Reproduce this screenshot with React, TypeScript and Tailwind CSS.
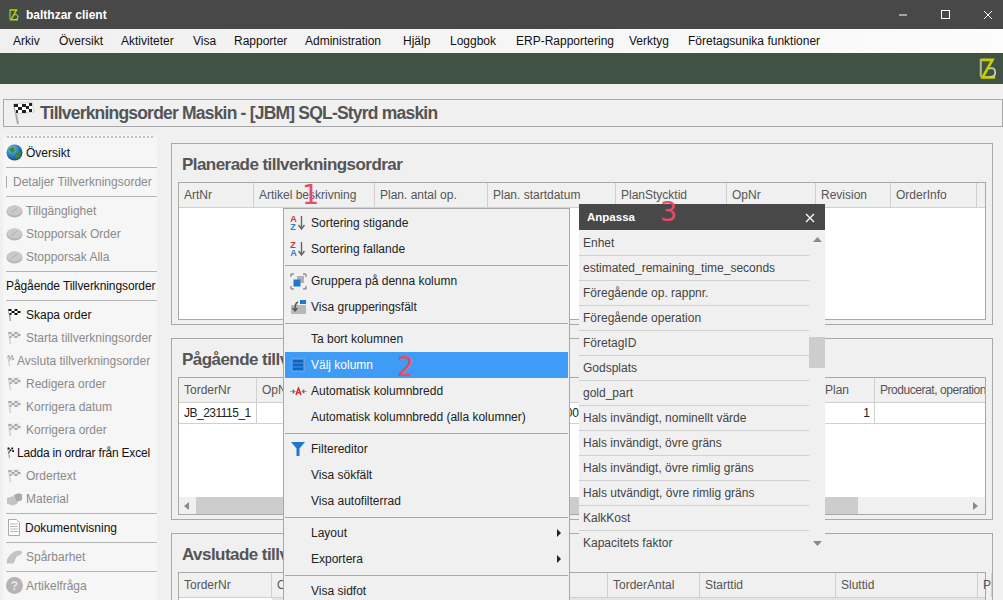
import React from "react";

const font = "font-['Liberation_Sans',Arial,sans-serif]";

function Flag({ dim = false, small = false }: { dim?: boolean; small?: boolean }) {
  const a = dim ? "#a8a8a8" : "#111";
  const b = dim ? "#e8e8e8" : "#fff";
  return (
    <svg width={small ? 8 : 17} height="15" viewBox={small ? "0 0 9 15" : "0 0 16 15"} className="shrink-0">
      <path d="M2 2 L4 14" stroke={dim ? "#c8c8c8" : "#999"} strokeWidth="1.2" />
      {small ? (
        <>
          <path d="M2 2 L8 1 L9 7 L3 8Z" fill={b} />
          <path d="M2 2h2v2h-2zM6 2h2v2h-2zM4 4h2v2h-2zM7 5h2v2h-2zM3 6h1v2h-1z" fill={a} />
        </>
      ) : (
        <>
          <path d="M2 2 L13 1 L14 7 L3 8Z" fill={b} />
          <path d="M2 2h3v2h-3zM8 2h3v2h-3zM5 4h3v2h-3zM11 4h3v2h-3zM3 6h2v2h-2zM8 6h3v2h-3z" fill={a} />
        </>
      )}
    </svg>
  );
}

function Globe() {
  return (
    <svg width="17" height="17" viewBox="0 0 17 17" className="shrink-0">
      <defs>
        <radialGradient id="g" cx="35%" cy="30%" r="75%">
          <stop offset="0" stopColor="#7cc0ee" />
          <stop offset="0.6" stopColor="#2478b8" />
          <stop offset="1" stopColor="#0f4a80" />
        </radialGradient>
      </defs>
      <circle cx="8.5" cy="8.5" r="8" fill="url(#g)" />
      <path d="M3 5 L7 3 L9 6 L7 9 L5 8Z M10 9 L15 8 L14 13 L10 15 L9 12Z" fill="#3f8a2f" />
    </svg>
  );
}

function Pill() {
  return (
    <svg width="17" height="14" viewBox="0 0 17 14" className="shrink-0">
      <ellipse cx="8.5" cy="7.5" rx="8" ry="6" fill="#b4b4b4" />
      <ellipse cx="8.5" cy="6.5" rx="7.5" ry="5" fill="#cacaca" />
      <path d="M5 9 L11 4" stroke="#aaa" strokeWidth="1" />
    </svg>
  );
}

function Doc() {
  return (
    <svg width="16" height="17" viewBox="0 0 16 17" className="shrink-0">
      <path d="M2.5 .5h8l3 3v13h-11z" fill="#fff" stroke="#aaa" />
      <path d="M4 5h8M4 7.5h8M4 10h8M4 12.5h8" stroke="#bbb" />
    </svg>
  );
}

function Box() {
  return (
    <svg width="17" height="14" viewBox="0 0 18 14" className="shrink-0">
      <path d="M1 6l6-2 5 2v6l-5 2-6-2z" fill="#c4c4c4" />
      <path d="M8 3l5-2 4 1v6l-5 2z" fill="#a9a9a9" />
    </svg>
  );
}

function Trace() {
  return (
    <svg width="17" height="16" viewBox="0 0 18 16" className="shrink-0">
      <path d="M1 15C0 10 4 5 8 3c3-2 8-2 9 0 0 3-4 3-6 5-2 3-1 6-4 7-2 0-4 0-6 0z" fill="#c4c4c4" />
    </svg>
  );
}

function Question() {
  return (
    <span className="flex h-[17px] w-[17px] shrink-0 items-center justify-center rounded-full bg-[#b4b4b4] text-[12px] font-bold text-[#e8e8e8]">?</span>
  );
}

function Logo({ size }: { size: number }) {
  return (
    <svg width={size} height={size * 1.2} viewBox="0 0 20 24" fill="none">
      <path d="M2 1v20" stroke="#a8b88a" strokeWidth="2.4" />
      <path d="M2 2h13L4 21.5h14" stroke="#c4d000" strokeWidth="3" />
      <path d="M11 12c4-2 7 0 7 4s-3 5-6 5" stroke="#c5d2a8" strokeWidth="2" />
    </svg>
  );
}

type Side = { t: string; icon?: React.ReactNode; dim?: boolean; cls?: string };

const Sep = () => <div className="mt-[3px] mb-[2px] ml-[3px] h-px bg-[#b4b4b4]" />;

function SideRow({ t, icon, dim, cls = "" }: Side) {
  return (
    <div className={`flex h-[23px] items-center gap-[3px] pl-[3px] whitespace-nowrap text-[12px] ${dim ? "text-[#8a8a8a]" : "text-[#111]"} ${cls}`}>
      {icon}
      <span>{t}</span>
    </div>
  );
}

function Sidebar() {
  return (
    <aside className="mt-[8px] ml-[3px] flex w-[154px] shrink-0 flex-col bg-[#f6f6f6] pt-[1px]">
      <div className="mx-[4px] mb-[3px] border-t-2 border-dotted border-[#c4c4c4]" />
      <SideRow t="Översikt" icon={<Globe />} />
      <Sep />
      <SideRow t="Detaljer Tillverkningsorder" dim icon={<span className="mr-[3px] h-3 w-[1px] bg-[#aaa]" />} />
      <Sep />
      <SideRow t="Tillgänglighet" dim icon={<Pill />} />
      <SideRow t="Stopporsak Order" dim icon={<Pill />} />
      <SideRow t="Stopporsak Alla" dim icon={<Pill />} />
      <Sep />
      <SideRow t="Pågående Tillverkningsorder" cls="tracking-[-0.1px]" />
      <Sep />
      <SideRow t="Skapa order" icon={<Flag />} />
      <SideRow t="Starta tillverkningsorder" dim icon={<Flag dim />} />
      <SideRow t="Avsluta tillverkningsorder" dim icon={<Flag dim small />} />
      <SideRow t="Redigera order" dim icon={<Flag dim />} />
      <SideRow t="Korrigera datum" dim icon={<Flag dim />} />
      <SideRow t="Korrigera order" dim icon={<Flag dim />} />
      <SideRow t="Ladda in ordrar från Excel" cls="tracking-[-0.2px]" icon={<Flag small />} />
      <SideRow t="Ordertext" dim icon={<Flag dim />} />
      <SideRow t="Material" dim icon={<Box />} />
      <Sep />
      <SideRow t="Dokumentvisning" icon={<Doc />} />
      <Sep />
      <SideRow t="Spårbarhet" dim icon={<Trace />} />
      <Sep />
      <SideRow t="Artikelfråga" dim icon={<Question />} />
    </aside>
  );
}

function HeaderRow({ cols }: { cols: [string, string][] }) {
  return (
    <div className="flex h-[25px] shrink-0 border-b border-[#d0d0d0] bg-[#f0f0f0]">
      {cols.map(([t, w], i) => (
        <div key={i} className={`flex shrink-0 items-center overflow-hidden whitespace-nowrap border-r border-[#d0d0d0] pl-[5px] text-[12px] text-[#555] ${w}`}>
          {t}
        </div>
      ))}
    </div>
  );
}

function Arrow({ d }: { d: "l" | "r" | "u" | "d" }) {
  const p = { l: "M6 1v8L1 5z", r: "M1 1v8l5-4z", u: "M0 6h9L4.5 1z", d: "M0 1h9L4.5 6z" }[d];
  return (
    <svg width="9" height="10" viewBox="0 0 9 10" className="shrink-0">
      <path d={p} fill="#8a8a8a" />
    </svg>
  );
}

function Panel({ title, className, children }: { title: string; className: string; children: React.ReactNode }) {
  return (
    <section className={`flex shrink-0 flex-col border border-[#a8a8a8] bg-[#f0f0f0] px-[6px] ${className}`}>
      <h2 className="flex h-[38px] shrink-0 items-center pt-[2px] pl-[4px] text-[17px] leading-none font-bold tracking-[-0.55px] whitespace-nowrap text-[#555]">{title}</h2>
      {children}
    </section>
  );
}

function Main() {
  return (
    <main className="flex min-w-0 flex-1 flex-col gap-[13px] pt-[16px] pl-[14px] pr-[10px]">
      <Panel title="Planerade tillverkningsordrar" className="h-[182px]">
        <div className="flex h-[138px] flex-col border border-[#a8a8a8] bg-white">
          <HeaderRow
            cols={[
              ["ArtNr", "w-[75px]"],
              ["Artikel beskrivning", "w-[121px]"],
              ["Plan. antal op.", "w-[113px]"],
              ["Plan. startdatum", "w-[128px]"],
              ["PlanStycktid", "w-[111px]"],
              ["OpNr", "w-[89px]"],
              ["Revision", "w-[75px]"],
              ["OrderInfo", "w-[86px]"],
            ]}
          />
        </div>
      </Panel>
      <Panel title="Pågående tillverkningsordrar" className="h-[182px]">
        <div className="flex h-[138px] flex-col border border-[#a8a8a8] bg-white">
          <div className="flex h-[25px] shrink-0 border-b border-[#d0d0d0] bg-[#f0f0f0] text-[12px] text-[#555]">
            <div className="flex w-[78px] items-center border-r border-[#d0d0d0] pl-[5px]">TorderNr</div>
            <div className="flex w-[564px] items-center pl-[5px]">OpNr</div>
            <div className="flex w-[54px] items-center border-r border-[#d0d0d0] pl-[4px]">Plan</div>
            <div className="flex flex-1 items-center overflow-hidden pl-[5px] tracking-[-0.45px] whitespace-nowrap">Producerat, operation</div>
          </div>
          <div className="flex h-[21px] shrink-0 border-b border-[#d0d0d0] text-[12px] text-[#222]">
            <div className="flex w-[78px] items-center border-r border-[#d0d0d0] pl-[5px] tracking-[-0.5px]">JB_231115_1</div>
            <div className="flex w-[322px] items-center justify-end">00</div>
            <div className="w-[242px]" />
            <div className="flex w-[54px] items-center justify-end border-r border-[#d0d0d0] pr-[4px]">1</div>
          </div>
          <div className="flex-1" />
          <div className="flex h-[17px] shrink-0 items-center bg-[#f0f0f0]">
            <div className="flex w-[17px] justify-center"><Arrow d="l" /></div>
            <div className="h-full w-[662px] bg-[#cdcdcd]" />
            <div className="flex-1" />
            <div className="flex w-[17px] justify-center"><Arrow d="r" /></div>
          </div>
        </div>
      </Panel>
      <Panel title="Avslutade tillverkningsordrar" className="h-[100px]">
        <div className="flex flex-1 flex-col border border-[#a8a8a8] bg-white">
          <HeaderRow
            cols={[
              ["TorderNr", "w-[93px]"],
              ["Operation", "w-[336px]"],
              ["TorderAntal", "w-[92px]"],
              ["Starttid", "w-[136px]"],
              ["Sluttid", "w-[142px]"],
              ["Pl", "w-[14px]"],
            ]}
          />
          <div className="flex h-[20px]">
            <div className="w-[93px] bg-white" />
            <div className="flex-1 bg-[#e4e4e4]" />
          </div>
        </div>
      </Panel>
    </main>
  );
}

function MI({ t, icon, active, sub }: { t: string; icon?: React.ReactNode; active?: boolean; sub?: boolean }) {
  return (
    <div className={`flex h-[26px] shrink-0 items-center text-[12px] ${active ? "bg-[#3f9cf6] text-white" : "text-[#222]"}`}>
      <div className="flex w-[26px] justify-center">{icon}</div>
      <div className="flex-1 whitespace-nowrap">{t}</div>
      {sub && (
        <svg width="6" height="8" viewBox="0 0 6 8" className="mr-[6px]">
          <path d="M1 0v8l4-4z" fill="#222" />
        </svg>
      )}
    </div>
  );
}

const MSp = () => <div className="my-[2.5px] h-px shrink-0 bg-[#a8a8a8]" />;

function SortIcon({ top, bottom, topCls, bottomCls }: { top: string; bottom: string; topCls: string; bottomCls: string }) {
  return (
    <span className="flex items-center">
      <span className="flex flex-col text-[9px] leading-[8px] font-bold">
        <span className={topCls}>{top}</span>
        <span className={bottomCls}>{bottom}</span>
      </span>
      <svg width="9" height="16" viewBox="0 0 9 16">
        <path d="M4.5 1v12M1.5 10l3 4 3-4" stroke="#666" strokeWidth="1.4" fill="none" />
      </svg>
    </span>
  );
}

function ContextMenu() {
  return (
    <div className="absolute top-[208px] left-[283px] flex h-[400px] w-[287px] flex-col border border-[#a8a8a8] bg-[#f0f0f0] px-[1px] pt-[1px]">
      <MI t="Sortering stigande" icon={<SortIcon top="A" bottom="Z" topCls="text-[#d03030]" bottomCls="text-[#2a7cd8]" />} />
      <MI t="Sortering fallande" icon={<SortIcon top="Z" bottom="A" topCls="text-[#d03030]" bottomCls="text-[#2a7cd8]" />} />
      <MSp />
      <MI
        t="Gruppera på denna kolumn"
        icon={
          <svg width="17" height="17" viewBox="0 0 17 17">
            <path d="M1 4V1h3M13 1h3v3M16 13v3h-3M4 16H1v-3" stroke="#666" fill="none" />
            <rect x="7" y="3" width="7" height="7" fill="#b0b0b0" />
            <rect x="3.5" y="6.5" width="7" height="7" fill="#1e78d2" />
          </svg>
        }
      />
      <MI
        t="Visa grupperingsfält"
        icon={
          <svg width="15" height="14" viewBox="0 0 15 14">
            <rect x="0" y="5" width="15" height="9" fill="#b8b8b8" />
            <rect x="9" y="0" width="6" height="4" fill="#1e78d2" />
            <path d="M7 2C4 3 4 6 4 10M1.5 8l2.5 3 2.5-3" stroke="#555" strokeWidth="1.4" fill="none" />
          </svg>
        }
      />
      <MSp />
      <MI t="Ta bort kolumnen" />
      <MI
        t="Välj kolumn"
        active
        icon={
          <svg width="14" height="14" viewBox="0 0 14 14">
            <rect x=".5" y=".5" width="13" height="13" fill="#3f8fe0" stroke="#6a9fd8" />
            <path d="M2 2h10v2.5H2zM2 5.8h10v2.5H2zM2 9.5h10V12H2z" fill="#0f62c0" />
          </svg>
        }
      />
      <MI
        t="Automatisk kolumnbredd"
        icon={
          <svg width="17" height="9" viewBox="0 0 17 9">
            <path d="M0 4.5h3M3 2.5v4l2-2zM17 4.5h-3M14 2.5v4l-2-2z" stroke="#666" fill="#666" strokeWidth=".6" />
            <path d="M6 8l2.5-7 2.5 7M7 5.8h3" stroke="#d03030" strokeWidth="1.5" fill="none" />
          </svg>
        }
      />
      <MI t="Automatisk kolumnbredd (alla kolumner)" />
      <MSp />
      <MI
        t="Filtereditor"
        icon={
          <svg width="14" height="14" viewBox="0 0 14 14">
            <path d="M0 0h14L8.5 6.5V14h-3V6.5z" fill="#1e78d2" />
          </svg>
        }
      />
      <MI t="Visa sökfält" />
      <MI t="Visa autofilterrad" />
      <MSp />
      <MI t="Layout" sub />
      <MI t="Exportera" sub />
      <MSp />
      <MI t="Visa sidfot" />
    </div>
  );
}

const fields = [
  "Enhet",
  "estimated_remaining_time_seconds",
  "Föregående op. rappnr.",
  "Föregående operation",
  "FöretagID",
  "Godsplats",
  "gold_part",
  "Hals invändigt, nominellt värde",
  "Hals invändigt, övre gräns",
  "Hals invändigt, övre rimlig gräns",
  "Hals utvändigt, övre rimlig gräns",
  "KalkKost",
  "Kapacitets faktor",
];

function Customize() {
  return (
    <div className="absolute top-[204px] left-[579px] flex w-[246px] flex-col bg-[#f0f0f0]">
      <div className="flex h-[26px] items-center justify-between bg-[#484848] pt-[1px] pr-[10px] pl-[8px] text-[11.5px] font-bold text-white">
        <span>Anpassa</span>
        <svg width="10" height="10" viewBox="0 0 10 10">
          <path d="M1 1l8 8M9 1l-8 8" stroke="#fff" strokeWidth="1.3" />
        </svg>
      </div>
      <div className="flex">
        <div className="w-[230px] pt-[1px]">
          {fields.map((f, i) => (
            <div key={f} className={`flex h-[25px] items-center border-b pl-[4px] text-[12px] whitespace-nowrap text-[#444] ${i < fields.length - 1 ? "border-[#d0d0d0]" : "border-transparent"}`}>
              {f}
            </div>
          ))}
        </div>
        <div className="flex w-[16px] flex-col items-center pt-[6px] pb-[6px]">
          <Arrow d="u" />
          <div className="mt-[91px] h-[31px] w-full bg-[#cdcdcd]" />
          <div className="flex-1" />
          <Arrow d="d" />
        </div>
      </div>
    </div>
  );
}

const Num = ({ n, cls }: { n: string; cls: string }) => (
  <span className={`absolute font-['DejaVu_Sans',sans-serif] text-[27px] leading-none text-[#ea4a63] ${cls}`}>{n}</span>
);

const menu: [string, string][] = [
  ["Arkiv", "w-[46px]"],
  ["Översikt", "w-[62px]"],
  ["Aktiviteter", "w-[72px]"],
  ["Visa", "w-[41px]"],
  ["Rapporter", "w-[71px]"],
  ["Administration", "w-[98px]"],
  ["Hjälp", "w-[47px]"],
  ["Loggbok", "w-[66px]"],
  ["ERP-Rapportering", "w-[113px]"],
  ["Verktyg", "w-[59px]"],
  ["Företagsunika funktioner", "w-[140px]"],
];

export default function App() {
  return (
    <div className={`relative flex h-[600px] w-[1003px] flex-col overflow-hidden bg-[#f0f0f0] ${font}`}>
      <header className="flex h-[29px] shrink-0 items-center bg-[#484848] text-white">
        <div className="ml-[6px] flex h-[16px] w-[15px] items-center justify-center bg-[#3f5040]">
          <Logo size={10} />
        </div>
        <span className="ml-[5px] text-[12px] font-bold">balthzar client</span>
        <div className="mr-[10px] ml-auto flex items-center gap-[32px]">
          <svg width="10" height="10" viewBox="0 0 10 10"><path d="M0 5h8" stroke="#fff" /></svg>
          <svg width="10" height="10" viewBox="0 0 10 10"><rect x=".5" y=".5" width="8" height="8" fill="none" stroke="#fff" /></svg>
          <svg width="10" height="10" viewBox="0 0 10 10"><path d="M1 1l8 8M9 1l-8 8" stroke="#fff" /></svg>
        </div>
      </header>
      <nav className="flex h-[24px] shrink-0 items-center bg-gradient-to-r from-[#f0f0f0] to-[#fcfcfc] pl-[13px] text-[12px] text-[#111]">
        {menu.map(([m, w]) => (
          <span key={m} className={`whitespace-nowrap ${w}`}>{m}</span>
        ))}
      </nav>
      <div className="flex h-[31px] shrink-0 items-center justify-end bg-[#405244] pr-[6px]">
        <Logo size={18} />
      </div>
      <div className="mt-[15px] ml-[3px] flex h-[28px] shrink-0 items-center gap-[5px] border border-[#a8a8a8] pl-[7px]">
        <svg width="24" height="24" viewBox="0 0 24 24" className="shrink-0">
          <path d="M3 3L7 23" stroke="#aaa" strokeWidth="2" />
          <path d="M3 3l18-2 2 10-18 2z" fill="#fff" stroke="#aaa" strokeWidth=".5" />
          <path d="M3 3h4v3H3zM11 3h4v3h-4zM18 2h3v3h-3zM7 6h4v3H7zM15 5h3v3h-3zM5 9h2v3H5zM11 9h4v3h-4zM18 8h3v3h-3z" fill="#222" />
        </svg>
        <h1 className="text-[17.5px] font-bold tracking-[-0.8px] whitespace-nowrap text-[#555]">Tillverkningsorder Maskin - [JBM] SQL-Styrd maskin</h1>
      </div>
      <div className="flex min-h-0 flex-1">
        <Sidebar />
        <Main />
      </div>
      <ContextMenu />
      <Customize />
      <Num n="1" cls="top-[181px] left-[302px]" />
      <Num n="2" cls="top-[353px] left-[397px]" />
      <Num n="3" cls="top-[198px] left-[660px]" />
    </div>
  );
}
